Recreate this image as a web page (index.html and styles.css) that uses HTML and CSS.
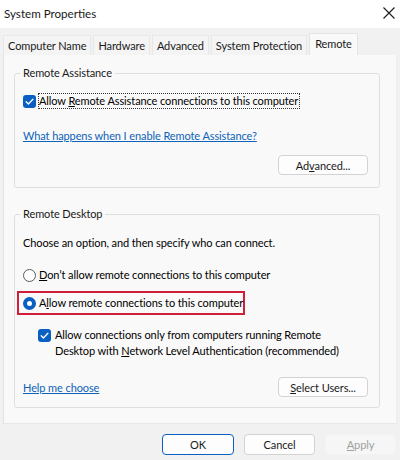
FILE: index.html
```html
<!DOCTYPE html>
<html>
<head>
<meta charset="utf-8">
<link rel="stylesheet" href="styles.css">
</head>
<body>
<div class="window">
  <div class="titlebar">
    <span class="title">System Properties</span>
    <svg class="close" width="12" height="12" viewBox="0 0 12 12"><path d="M0.5 0.5 L11.5 11.5 M11.5 0.5 L0.5 11.5" stroke="#1a1a1a" stroke-width="1.1" fill="none"/></svg>
  </div>
  <div class="client">
    <div class="tabs">
      <div class="tab">Computer Name</div>
      <div class="tab">Hardware</div>
      <div class="tab">Advanced</div>
      <div class="tab">System Protection</div>
      <div class="tab active">Remote</div>
    </div>
    <div class="panel">
      <fieldset class="group g1">
        <legend>Remote Assistance</legend>
        <div class="check-row">
          <span class="checkbox"><svg width="13" height="13" viewBox="0 0 13 13"><path d="M3.2 6.8 L5.4 9 L9.9 4.3" stroke="#fff" stroke-width="1.3" fill="none" stroke-linecap="round" stroke-linejoin="round"/></svg></span>
          <span class="focus">Allow <u>R</u>emote Assistance connections to this computer</span>
        </div>
        <div class="link-row"><a class="link">What happens when I enable Remote Assistance?</a></div>
        <div class="btn-row"><button class="btn adv">Ad<u>v</u>anced...</button></div>
      </fieldset>
      <fieldset class="group g2">
        <legend>Remote Desktop</legend>
        <div class="intro">Choose an option, and then specify who can connect.</div>
        <div class="radio-row r1"><span class="radio"></span><span class="lbl"><u>D</u>on’t allow remote connections to this computer</span></div>
        <div class="radio-row r2 highlight"><span class="radio on"></span><span class="lbl">A<u>l</u>low remote connections to this computer</span></div>
        <div class="check-row nla">
          <span class="checkbox"><svg width="13" height="13" viewBox="0 0 13 13"><path d="M3.2 6.8 L5.4 9 L9.9 4.3" stroke="#fff" stroke-width="1.3" fill="none" stroke-linecap="round" stroke-linejoin="round"/></svg></span>
          <span class="lbl">Allow connections only from computers running Remote<br>Desktop with <u>N</u>etwork Level Authentication (recommended)</span>
        </div>
        <div class="bottom-row">
          <a class="link">Help me choose</a>
          <button class="btn sel"><u>S</u>elect Users...</button>
        </div>
      </fieldset>
    </div>
    <div class="footer">
      <button class="btn fbtn ok">OK</button>
      <button class="btn fbtn">Cancel</button>
      <button class="btn fbtn apply" disabled><u>A</u>pply</button>
    </div>
  </div>
</div>
</body>
</html>
```

FILE: styles.css
```css
html, body {
  margin: 0;
  padding: 0;
  width: 400px;
  height: 460px;
  overflow: hidden;
  background: #f0f0f0;
}
.window {
  width: 400px;
  height: 460px;
  font-family: Lato, "Liberation Sans", sans-serif;
  font-size: 11px;
  letter-spacing: -0.1px;
  color: #000;
  display: flex;
  flex-direction: column;
  white-space: nowrap;
}
.titlebar {
  height: 28px;
  background: #fff;
  display: flex;
  align-items: center;
  justify-content: space-between;
  padding: 0 5px 0 4px;
  box-sizing: border-box;
  flex: none;
}
.title {
  font-size: 11.6px;
  letter-spacing: 0;
  color: #1a1a1a;
  margin-top: -2px;
}
.close {
  margin-top: -2px;
}
.client {
  flex: 1;
  background: #f1f1f1;
  display: flex;
  flex-direction: column;
}
.tabs {
  display: flex;
  align-items: flex-end;
  padding-left: 3px;
  margin-top: 5px;
  height: 22px;
  gap: 2px;
}
.tab {
  height: 20px;
  line-height: 19px;
  padding: 0 4px;
  background: #f4f4f4;
  border: 1px solid #e8e8e8;
  border-bottom: none;
  box-sizing: border-box;
  color: #1a1a1a;
}
.tab.active {
  height: 22px;
  line-height: 19px;
  background: #f9f9f9;
  border-color: #e4e4e4;
  padding: 0 5px;
}
.panel {
  margin-left: 3px;
  width: 394px;
  height: 369px;
  box-sizing: border-box;
  background: #f9f9f9;
  border-left: 1px solid #e2e2e2;
  border-right: 1px solid #ececec;
  border-bottom: 1px solid #e8e8e8;
  padding: 10px 0 0 10px;
}
.group {
  width: 366px;
  box-sizing: border-box;
  margin: 0;
  border: 1px solid #dedede;
  border-radius: 3px;
  padding: 12px 11px 12px 8px;
  min-inline-size: 0;
}
.group legend {
  padding: 0 3px;
  margin-left: -3px;
  line-height: 16px;
  color: #1a1a1a;
}
.g2 {
  margin-top: 18px;
  padding-top: 13px;
  padding-bottom: 10px;
}
.check-row {
  display: flex;
  align-items: flex-start;
  line-height: 16px;
}
.checkbox {
  width: 13px;
  height: 13px;
  border-radius: 3px;
  background: #0a5fc2;
  flex: none;
  margin-top: 2px;
  display: flex;
}
.focus {
  margin-left: 2px;
  border: 1px dotted #333;
  line-height: 14px;
  padding: 0 1px 0 0;
}
.link-row {
  margin-top: 19px;
  line-height: 16px;
}
.link {
  color: #0c63b8;
  text-decoration: underline;
}
.btn-row {
  display: flex;
  justify-content: flex-end;
  margin-top: 11px;
}
.btn {
  font-family: inherit;
  font-size: 11px;
  letter-spacing: -0.1px;
  height: 20px;
  background: #fdfdfd;
  border: 1px solid #d3d3d3;
  border-radius: 4px;
  padding: 0;
  color: #1a1a1a;
  box-sizing: border-box;
  line-height: 17px;
}
.adv, .sel {
  width: 90px;
}
.intro {
  line-height: 16px;
}
.radio-row {
  display: flex;
  align-items: center;
  line-height: 16px;
}
.r1 {
  margin-top: 16px;
}
.radio {
  width: 13px;
  height: 13px;
  border-radius: 50%;
  border: 1px solid #5b5b5b;
  background: #fff;
  box-sizing: border-box;
  flex: none;
  margin-right: 3px;
}
.radio.on {
  border: 4px solid #0a5fc2;
  background: #fff;
}
.highlight {
  margin-top: 8px;
  margin-left: -6px;
  width: 228px;
  box-sizing: border-box;
  border: 2px solid #cf1f3a;
  padding: 2px 0 2px 4px;
}
.nla {
  margin-top: 12px;
  padding-left: 15px;
}
.nla .checkbox {
  margin-right: 4px;
}
.bottom-row {
  display: flex;
  justify-content: space-between;
  align-items: center;
  margin-top: 18px;
}
.footer {
  display: flex;
  justify-content: flex-end;
  gap: 10px;
  padding: 10px 4px 0 0;
}
.fbtn {
  width: 71px;
  height: 21px;
}
.ok {
  width: 72px;
  border: 1px solid #0a5fc2;
}
.apply {
  background: #f6f6f6;
  border-color: #f3f3f3;
  color: #a0a0a0;
}
```
